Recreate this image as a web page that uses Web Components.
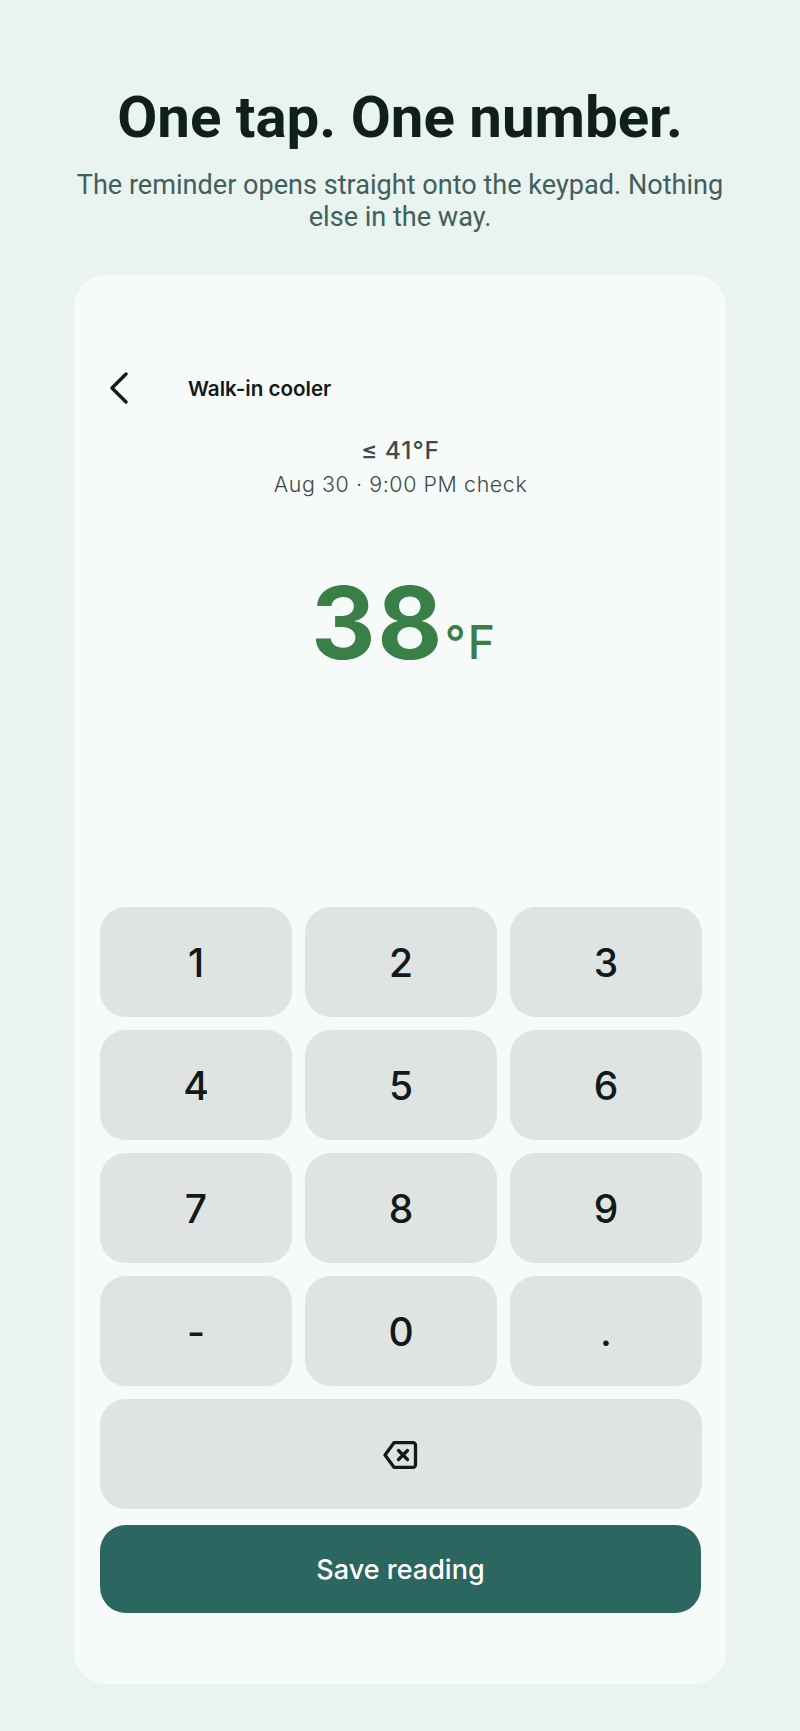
<!DOCTYPE html>
<html lang="en">
<head>
<meta charset="utf-8">
<title>One tap. One number.</title>
<style>
html,body{margin:0;padding:0;background:#e9f3f0}
</style>
</head>
<body>
<promo-screen>
  <span slot="title">One tap. One number.</span>
  <span slot="sub">The reminder opens straight onto the keypad. Nothing else in the way.</span>
  <reading-card></reading-card>
</promo-screen>
<script>
/* promo frame: headline, subhead, then whatever card is slotted */
class PromoScreen extends HTMLElement {
  connectedCallback() {
    if (this.shadowRoot) return;
    const root = this.attachShadow({ mode: 'open' });
    root.innerHTML = `<style>
:host{display:flex;flex-direction:column;align-items:center;width:800px;height:1731px;box-sizing:border-box;padding-top:81px;background:#e9f3f0;font-family:Roboto,sans-serif}
h1{margin:0;font-size:58.2px;line-height:72px;font-weight:700;color:#0e1f1c;text-align:center}
p{margin:16px 0 0;width:660px;font-size:27.1px;line-height:32px;font-weight:400;color:#42605a;text-align:center}
.card{margin-top:42px}
</style>
<h1><slot name="title"></slot></h1>
<p><slot name="sub"></slot></p>
<div class="card"><slot></slot></div>`;
  }
}
customElements.define('promo-screen', PromoScreen);

class KeyPad extends HTMLElement {
  connectedCallback() {
    if (this.shadowRoot) return;
    const root = this.attachShadow({ mode: 'open' });
    const keys = ['1','2','3','4','5','6','7','8','9','-','0','.'];
    root.innerHTML = `<style>
:host{display:grid;grid-template-columns:repeat(3,192px);grid-auto-rows:110px;gap:13px 13px;font-family:Inter,sans-serif}
.k{display:flex;align-items:center;justify-content:center;background:#dfe3e2;border-radius:26px;font-size:39px;font-weight:450;color:#111a18}
.wide{grid-column:1 / -1}
svg{display:block}
</style>` + keys.map(k => `<div class="k">${k}</div>`).join('') +
    `<div class="k wide"><svg width="36" height="34" viewBox="1 1 36 34" fill="none" stroke="#111a18" stroke-width="3.3" stroke-linejoin="round" stroke-linecap="round"><path d="M12 6.7H31a2.5 2.5 0 0 1 2.5 2.5v19.6a2.5 2.5 0 0 1-2.5 2.5H12L3 19z"/><path d="M16.5 14.5l9 9M25.5 14.5l-9 9"/></svg></div>`;
  }
}
customElements.define('key-pad', KeyPad);

/* the phone-ish card with the reading entry */
class ReadingCard extends HTMLElement {
  connectedCallback() {
    if (this.shadowRoot) return;
    const root = this.attachShadow({ mode: 'open' });
    root.innerHTML = `<style>
:host{display:flex;flex-direction:column;width:652px;height:1409px;box-sizing:border-box;padding:98px 25px 0 26px;background:#f6fbf9;border-radius:32px;font-family:Inter,sans-serif}
.top{display:flex;align-items:center;height:30px}
.top svg{display:block;margin-left:10px}
.top b{margin-left:58px;font-size:20.6px;font-weight:600;color:#111a18}
.lim{margin-top:32px;text-align:center;font-size:24.5px;line-height:30px;font-weight:500;letter-spacing:1px;word-spacing:-1px;color:#3f4a48}
.when{margin-top:4px;text-align:center;font-size:21.4px;line-height:30px;font-weight:300;letter-spacing:.6px;color:#3f4a48}
.val{display:flex;justify-content:center;align-items:baseline;margin-top:64px;height:120px;padding-left:7px;color:#3a8046}
.num{font-size:100px;line-height:120px;font-weight:700;letter-spacing:1.5px}
.unit{font-size:46px;font-weight:550;letter-spacing:2px;margin-left:1px}
key-pad{margin-top:224px}
.save{display:flex;align-items:center;justify-content:center;margin-top:16px;height:88px;border-radius:26px;background:#2c6660;color:#fff;font-size:27px;font-weight:500}
</style>
<div class="top"><svg width="20" height="32" viewBox="0 0 20 32" fill="none" stroke="#111a18" stroke-width="3.4" stroke-linecap="round" stroke-linejoin="round"><path d="M16 2L2 16l14 14"/></svg><b>Walk-in cooler</b></div>
<div class="lim">≤ 41°F</div>
<div class="when">Aug 30 · 9:00 PM check</div>
<div class="val"><span class="num">38</span><span class="unit">°F</span></div>
<key-pad></key-pad>
<div class="save">Save reading</div>`;
  }
}
customElements.define('reading-card', ReadingCard);
</script>
</body>
</html>
